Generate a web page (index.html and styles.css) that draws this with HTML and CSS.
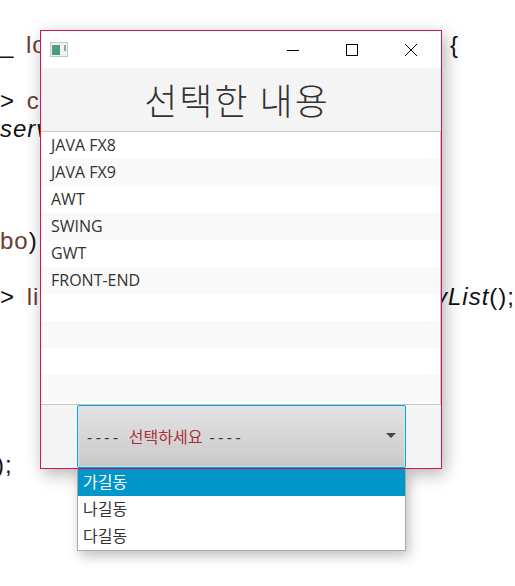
FILE: index.html
```html
<!DOCTYPE html>
<html lang="en">
<head>
    <meta charset="UTF-8">
    <meta name="viewport" content="width=device-width, initial-scale=1.0">
    <title>선택한 내용</title>
    <link rel="stylesheet" href="styles.css">
</head>
<body>
    <!-- code editor showing behind the window -->
    <div class="code">
        <div class="line"><span class="left"><span class="plain">_</span> <span class="name">loc</span></span><span class="brace">{</span></div>
        <div class="line"></div>
        <div class="line"><span class="left"><span class="plain">&gt;</span> <span class="name">c</span></span></div>
        <div class="line"><span class="left"><i class="plain">serv</i></span></div>
        <div class="line"></div>
        <div class="line"></div>
        <div class="line"></div>
        <div class="line"><span class="left"><span class="name">bo</span><span class="plain">)</span></span></div>
        <div class="line"></div>
        <div class="line"><span class="left"><span class="plain">&gt;</span> <span class="name">li</span></span><span class="tail"><i>yList</i>();</span></div>
        <div class="line"></div>
        <div class="line"></div>
        <div class="line"></div>
        <div class="line"></div>
        <div class="line"></div>
        <div class="line"><span class="plain end">);</span></div>
    </div>

    <div class="window">
        <div class="titlebar">
            <svg class="app-icon" width="18" height="15" viewBox="0 0 18 15">
                <defs>
                    <linearGradient id="pane" x1="0" y1="0" x2="1" y2="1">
                        <stop offset="0" stop-color="#5b9ba0"/>
                        <stop offset="1" stop-color="#3f9a6c"/>
                    </linearGradient>
                </defs>
                <rect x="0.5" y="0.5" width="17" height="14" fill="#f0f2f2" stroke="#c4c8c8"/>
                <rect x="2" y="3" width="8" height="10" fill="url(#pane)"/>
                <rect x="14" y="3" width="2" height="6" fill="#7fb0c0"/>
            </svg>
            <div class="controls">
                <svg width="14" height="14" viewBox="0 0 14 14"><path d="M1 7.5h12" stroke="#000" fill="none"/></svg>
                <svg width="14" height="14" viewBox="0 0 14 14"><rect x="1.5" y="1.5" width="11" height="11" stroke="#000" fill="none"/></svg>
                <svg width="14" height="14" viewBox="0 0 14 14"><path d="M1 1l12 12M13 1L1 13" stroke="#000" fill="none"/></svg>
            </div>
        </div>
        <h1 class="heading">선택한 내용</h1>
        <ul class="list">
            <li>JAVA FX8</li>
            <li>JAVA FX9</li>
            <li>AWT</li>
            <li>SWING</li>
            <li>GWT</li>
            <li>FRONT-END</li>
            <li></li>
            <li></li>
            <li></li>
            <li></li>
        </ul>
        <div class="footer">
            <div class="combo">
                <span class="combo-text"><span class="dash">----</span> <span class="combo-hint">선택하세요</span> <span class="dash">----</span></span>
                <span class="arrow"></span>
                <ul class="dropdown">
                    <li class="selected">가길동</li>
                    <li>나길동</li>
                    <li>다길동</li>
                </ul>
            </div>
        </div>
    </div>
</body>
</html>
```

FILE: styles.css
```css
html, body {
    margin: 0;
    padding: 0;
    height: 100%;
    overflow: hidden;
    background: #fff;
}

body {
    position: relative;
    font-family: "Open Sans", "Noto Sans CJK KR", sans-serif;
}

.code {
    padding-top: 31px;
    font-family: "Liberation Sans", sans-serif;
    font-size: 24px;
    letter-spacing: 1px;
    color: #111;
}

.line {
    display: flex;
    height: 28px;
    line-height: 28px;
    white-space: nowrap;
    word-spacing: 4px;
}

.left {
    width: 400px;
    flex: none;
}

.brace {
    margin-left: 50px;
    color: #111;
}

.tail {
    margin-left: auto;
    color: #111;
}

.plain {
    color: #111;
}

.end {
    margin-left: -4px;
}

.name {
    color: #6a3d33;
}

.window {
    position: absolute;
    left: 40px;
    top: 30px;
    width: 402px;
    height: 439px;
    box-sizing: border-box;
    display: flex;
    flex-direction: column;
    background: #f4f4f4;
    border: 1px solid #d0145f;
    box-shadow: 3px 5px 16px rgba(0, 0, 0, 0.3);
}

.titlebar {
    height: 37px;
    flex: none;
    display: flex;
    justify-content: space-between;
    align-items: center;
    background: #fff;
}

.app-icon {
    margin-left: 9px;
}

.controls {
    display: flex;
    gap: 45px;
    margin-right: 23px;
}

.heading {
    height: 63px;
    margin: 0;
    padding-right: 8px;
    flex: none;
    text-align: center;
    font-family: "Noto Sans CJK KR", sans-serif;
    font-size: 36px;
    font-weight: 300;
    letter-spacing: 2px;
    line-height: 63px;
    color: #333;
}

.list {
    height: 272px;
    flex: none;
    margin: 0;
    padding: 0;
    list-style: none;
    background: #fff;
    border-top: 1px solid #c8c8c8;
    border-right: 1px solid #c8c8c8;
    border-bottom: 1px solid #c8c8c8;
}

.list li {
    height: 27px;
    padding-left: 10px;
    font-size: 16px;
    line-height: 27px;
    color: #333;
}

.list li:nth-child(even) {
    background: #f9f9f9;
}

.footer {
    flex: 1;
    padding-left: 36px;
}

.combo {
    position: relative;
    width: 329px;
    height: 63px;
    box-sizing: border-box;
    display: flex;
    justify-content: space-between;
    align-items: center;
    padding: 0 9px;
    background: linear-gradient(#e3e3e3, #c9c9c9);
    border: 1px solid #06a5dc;
    border-radius: 2px;
    box-shadow: inset 0 0 0 1px #d4e4ea;
}

.combo-text {
    margin-top: -2px;
    font-size: 16px;
    word-spacing: 3px;
    color: #333;
}

.dash {
    letter-spacing: 3.5px;
}

/* red subpixel fringe on the hangul in the original capture */
.combo-hint {
    font-weight: 400;
    color: #a8303c;
}

.arrow {
    margin-top: -3px;
    width: 0;
    height: 0;
    border-left: 5px solid transparent;
    border-right: 5px solid transparent;
    border-top: 5px solid #444;
}

.dropdown {
    position: absolute;
    left: -1px;
    top: 63px;
    width: 329px;
    margin: 0;
    padding: 0;
    list-style: none;
    box-sizing: border-box;
    background: #fff;
    border-left: 1px solid #aaa;
    border-right: 1px solid #aaa;
    border-bottom: 1px solid #aaa;
    box-shadow: 3px 5px 12px rgba(0, 0, 0, 0.25);
}

.dropdown li {
    height: 27px;
    padding-left: 5px;
    font-size: 16px;
    line-height: 27px;
    color: #333;
}

.dropdown li.selected {
    background: #0096c9;
    color: #fff;
}
```
